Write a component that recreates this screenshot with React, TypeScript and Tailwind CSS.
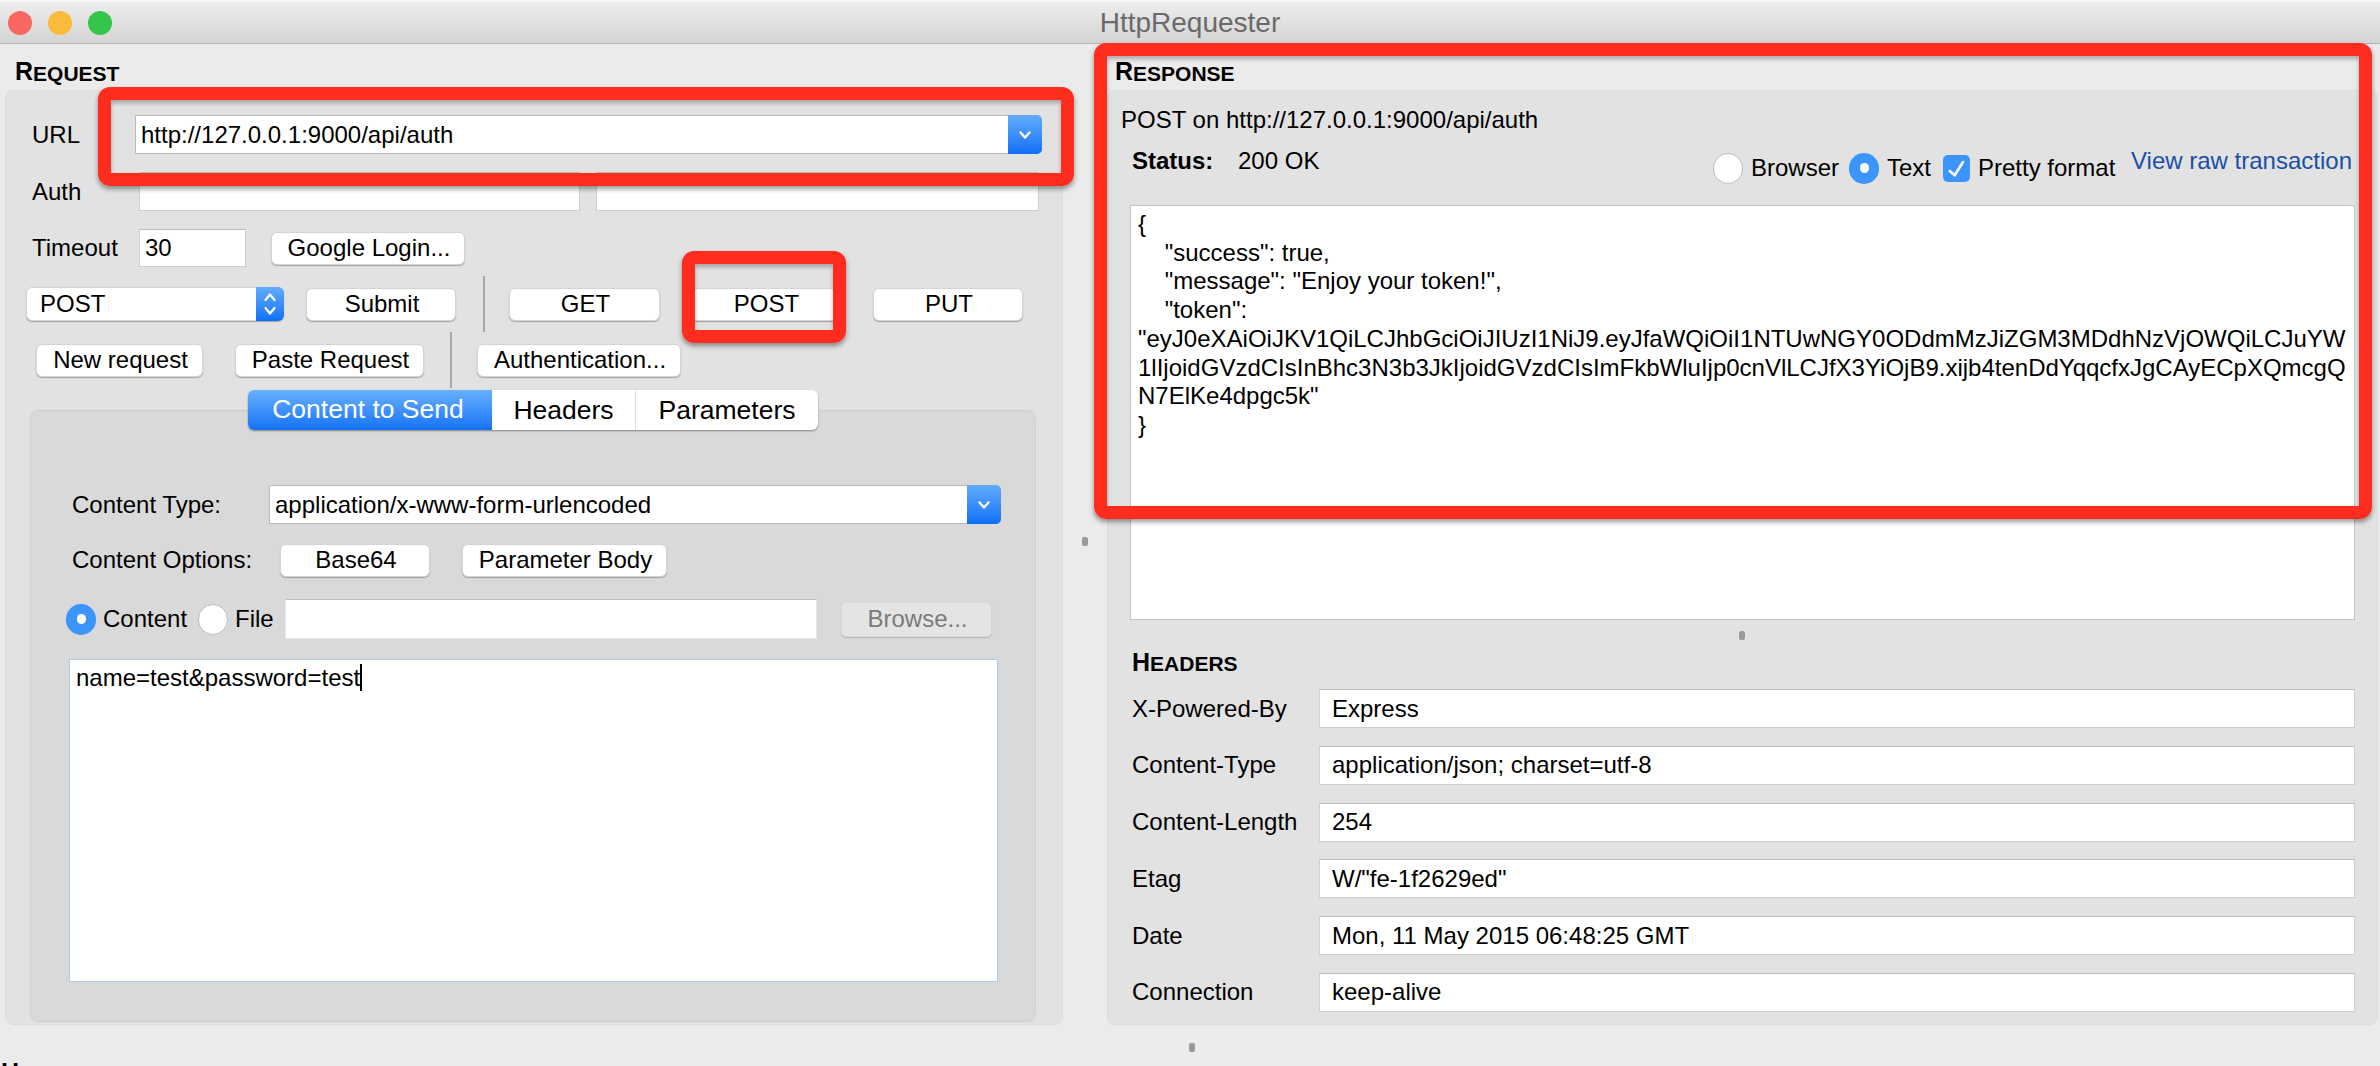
import React from "react";

const font = "font-['Liberation_Sans',Arial,sans-serif]";

function Chevron() {
  return (
    <svg width="14" height="10" viewBox="0 0 14 10" fill="none" stroke="white" strokeWidth="2.4" strokeLinecap="round" strokeLinejoin="round">
      <path d="M2.5 2.5 7 7.5l4.5-5" />
    </svg>
  );
}

function Stepper() {
  return (
    <svg width="14" height="26" viewBox="0 0 14 26" fill="none" stroke="white" strokeWidth="2.2" strokeLinecap="round" strokeLinejoin="round">
      <path d="M2.5 9 7 3.5 11.5 9" />
      <path d="M2.5 17 7 22.5l4.5-5.5" />
    </svg>
  );
}

function Button({ label, className = "" }: { label: string; className?: string }) {
  return (
    <button className={`flex h-[33px] items-center justify-center rounded-[6px] border border-[#d4d4d4] bg-white pl-[2px] text-black shadow-[0_1px_1px_rgba(0,0,0,0.28)] ${className}`}>
      {label}
    </button>
  );
}

function Field({ value = "", className = "" }: { value?: string; className?: string }) {
  return (
    <div className={`flex items-center border border-[#cfcfcf] border-t-[#bdbdbd] bg-white px-[5px] ${className}`}>{value}</div>
  );
}

function Combo({ value, className = "" }: { value: string; className?: string }) {
  return (
    <div className={`flex h-[39px] items-center rounded-r-[5px] border border-[#b9b9b9] bg-white pl-[5px] ${className}`}>
      <span className="flex-1">{value}</span>
      <span className="-my-px -mr-px flex h-[39px] w-[34px] items-center justify-center rounded-r-[5px] bg-gradient-to-b from-[#62acfc] to-[#0b6ff6]">
        <Chevron />
      </span>
    </div>
  );
}

function Radio({ on = false, className = "" }: { on?: boolean; className?: string }) {
  if (on) {
    return (
      <span className={`flex h-[31px] w-[30px] shrink-0 items-center justify-center rounded-full bg-[#3c95fb] ${className}`}>
        <span className="h-[10px] w-[9px] rounded-full bg-white" />
      </span>
    );
  }
  return <span className={`block h-[31px] w-[30px] shrink-0 rounded-full border border-[#bcbcbc] bg-white ${className}`} />;
}

function Grip({ className = "" }: { className?: string }) {
  return <span className={`block h-[9px] w-[6px] rounded-[2px] bg-[#9a9a9a] ${className}`} />;
}

function Overlay({ className }: { className: string }) {
  return (
    <div className={`pointer-events-none absolute rounded-[12px] border-[13px] border-[#ff2d1e] shadow-[0_3px_5px_rgba(0,0,0,0.4),inset_0_3px_4px_rgba(0,0,0,0.28)] ${className}`} />
  );
}

const headers = [
  ["X-Powered-By", "Express"],
  ["Content-Type", "application/json; charset=utf-8"],
  ["Content-Length", "254"],
  ["Etag", 'W/"fe-1f2629ed"'],
  ["Date", "Mon, 11 May 2015 06:48:25 GMT"],
  ["Connection", "keep-alive"],
];

const body = [
  "{",
  '    "success": true,',
  '    "message": "Enjoy your token!",',
  '    "token":',
  '"eyJ0eXAiOiJKV1QiLCJhbGciOiJIUzI1NiJ9.eyJfaWQiOiI1NTUwNGY0ODdmMzJiZGM3MDdhNzVjOWQiLCJuYW',
  "1lIjoidGVzdCIsInBhc3N3b3JkIjoidGVzdCIsImFkbWluIjp0cnVlLCJfX3YiOjB9.xijb4tenDdYqqcfxJgCAyECpXQmcgQ",
  'N7ElKe4dpgc5k"',
  "}",
];

export default function App() {
  return (
    <div className={`relative h-[1066px] w-[2380px] overflow-hidden bg-[#ebebeb] text-[24px] text-black ${font}`}>
      {/* title bar */}
      <div className="relative flex h-[44px] items-center justify-center border-b border-[#b4b4b4] border-t-2 border-t-[#f6f6f6] bg-gradient-to-b from-[#ededed] to-[#d4d4d4] text-[28px] text-[#6a6a6a]">
        <div className="absolute left-[8px] flex gap-[16px]">
          <span className="h-[24px] w-[24px] rounded-full bg-[#fa6760]" />
          <span className="h-[24px] w-[24px] rounded-full bg-[#fdbb3c]" />
          <span className="h-[24px] w-[24px] rounded-full bg-[#35c549]" />
        </div>
        HttpRequester
      </div>

      <div className="flex h-[1022px] pl-[5px] pr-[2px]">
        {/* request side */}
        <div className="flex w-[1058px] flex-col">
          <div className="flex h-[46px] items-end pb-[6px] pl-[10px] text-[21px] font-bold leading-none">
            <span className="text-[25px] leading-none">R</span>EQUEST
          </div>
          <div className="flex flex-1 flex-col rounded-[8px] border border-[#dcdcdc] bg-[#e2e2e2] pl-[20px] pt-[24px]">
            <div className="flex h-[39px] items-center pl-[6px]">
              <span className="w-[103px]">URL</span>
              <Combo value="http://127.0.0.1:9000/api/auth" className="w-[907px]" />
            </div>
            <div className="mt-[18px] flex h-[39px] items-center pl-[6px]">
              <span className="w-[107px]">Auth</span>
              <Field className="h-[39px] w-[441px]" />
              <Field className="ml-[16px] h-[39px] w-[443px]" />
            </div>
            <div className="mt-[18px] flex h-[38px] items-center pl-[6px]">
              <span className="w-[107px]">Timeout</span>
              <Field value="30" className="h-[38px] w-[107px]" />
              <Button label="Google Login..." className="ml-[25px] w-[194px]" />
            </div>
            <div className="mt-[9px] flex h-[56px] items-center">
              <div className="flex h-[34px] w-[258px] items-center rounded-[6px] border border-[#d4d4d4] bg-white pl-[13px] shadow-[0_1px_1px_rgba(0,0,0,0.28)]">
                <span className="flex-1">POST</span>
                <span className="-my-px -mr-px flex h-[34px] w-[28px] items-center justify-center rounded-r-[6px] bg-gradient-to-b from-[#62acfc] to-[#0b6ff6]">
                  <Stepper />
                </span>
              </div>
              <Button label="Submit" className="ml-[22px] w-[150px]" />
              <span className="ml-[27px] w-[2px] self-stretch bg-[#a8a8a8]" />
              <Button label="GET" className="ml-[24px] w-[151px]" />
              <Button label="POST" className="ml-[30px] w-[151px]" />
              <Button label="PUT" className="ml-[32px] w-[150px]" />
            </div>
            <div className="flex h-[56px] items-center pl-[10px]">
              <Button label="New request" className="w-[167px]" />
              <Button label="Paste Request" className="ml-[32px] w-[189px]" />
              <span className="ml-[26px] w-[2px] self-stretch bg-[#a8a8a8]" />
              <Button label="Authentication..." className="ml-[25px] w-[204px]" />
            </div>

            {/* tab pane */}
            <div className="mb-[2px] ml-[4px] mr-[26px] mt-[22px] flex flex-1 flex-col rounded-[8px] border border-[#cfcfcf] bg-[#d9d9d9]">
              <div className="-mt-[21px] flex h-[40px] w-[570px] self-center overflow-hidden rounded-[6px] bg-white pt-px text-[26.5px] shadow-[0_1px_2px_rgba(0,0,0,0.4)]">
                <div className="-mt-px flex w-[244px] items-center justify-center bg-gradient-to-b from-[#67b0fd] to-[#0e72f7] pr-[4px] text-white">Content to Send</div>
                <div className="flex w-[144px] items-center justify-center border-r border-[#dcdcdc]">Headers</div>
                <div className="flex flex-1 items-center justify-center">Parameters</div>
              </div>

              <div className="mt-[55px] flex h-[39px] items-center pl-[41px]">
                <span className="w-[197px]">Content Type:</span>
                <Combo value="application/x-www-form-urlencoded" className="w-[732px]" />
              </div>
              <div className="mt-[19px] flex h-[34px] items-center pl-[41px]">
                <span className="w-[208px]">Content Options:</span>
                <Button label="Base64" className="w-[150px]" />
                <Button label="Parameter Body" className="ml-[32px] w-[205px]" />
              </div>
              <div className="mt-[22px] flex h-[40px] items-center pl-[35px]">
                <Radio on />
                <span className="ml-[7px] w-[95px]">Content</span>
                <Radio />
                <span className="ml-[7px] w-[50px]">File</span>
                <Field className="h-[40px] w-[532px] border-[#e8e8e8]" />
                <button className="ml-[24px] flex h-[35px] w-[151px] items-center justify-center rounded-[5px] border border-[#d8d8d8] bg-[#e4e4e4] pl-[2px] text-[#7a7a7a] shadow-[0_1px_1px_rgba(0,0,0,0.15)]">Browse...</button>
              </div>
              <div className="ml-[38px] mt-[20px] h-[323px] w-[929px] border border-[#a9cdea] bg-white pl-[6px] pt-[4px] leading-[27px]">
                <span className="inline-block border-r-2 border-black">name=test&amp;password=test</span>
              </div>
            </div>
          </div>
          <div className="-ml-[4px] h-[41px] pt-[35px] text-[25px] font-bold leading-none">H</div>
        </div>

        {/* splitter */}
        <div className="flex w-[44px] items-start justify-center pt-[493px]">
          <Grip />
        </div>

        {/* response side */}
        <div className="flex flex-1 flex-col">
          <div className="flex h-[46px] items-end pb-[6px] pl-[8px] text-[21px] font-bold leading-none">
            <span className="text-[25px] leading-none">R</span>ESPONSE
          </div>
          <div className="flex h-[935px] flex-col rounded-[8px] border border-[#dcdcdc] bg-[#e2e2e2] pl-[13px] pr-[15px]">
            <div className="mt-[14px] h-[30px] leading-[30px]">POST on http://127.0.0.1:9000/api/auth</div>
            <div className="mt-[8px] flex h-[62px] items-start pl-[11px]">
              <span className="w-[106px] font-bold">Status:</span>
              <span>200 OK</span>
              <div className="ml-auto flex items-center pt-[7px]">
                <Radio />
                <span className="ml-[8px] w-[98px]">Browser</span>
                <Radio on />
                <span className="ml-[8px] w-[56px]">Text</span>
                <span className="flex h-[27px] w-[27px] items-center justify-center rounded-[5px] bg-[#3c95fb]">
                  <svg width="27" height="27" viewBox="0 0 27 27" fill="none" stroke="white" strokeWidth="2.6" strokeLinecap="round" strokeLinejoin="round">
                    <path d="M6.7 16l5 4.3L20 7" />
                  </svg>
                </span>
                <span className="ml-[8px] w-[153px]">Pretty format</span>
              </div>
              <a className="w-[231px] text-[#1a4fa8]">View raw transaction</a>
            </div>
            <div className="ml-[9px] h-[415px] w-[1225px] border border-[#c4c4c4] bg-white pl-[7px] pt-[4px] leading-[28.7px] whitespace-pre">
              {body.map((line) => (
                <div key={line}>{line}</div>
              ))}
            </div>
            <div className="flex h-[30px] items-center justify-center">
              <Grip />
            </div>
            <div className="ml-[11px] text-[21px] font-bold leading-[24px]">
              <span className="text-[25px]">H</span>EADERS
            </div>
            <div className="mt-[13px] flex flex-col gap-[17.8px] pl-[11px]">
              {headers.map(([k, v]) => (
                <div key={k} className="flex h-[39px] items-center">
                  <span className="w-[187px]">{k}</span>
                  <Field value={v} className="h-[39px] w-[1036px] pl-[12px]" />
                </div>
              ))}
            </div>
          </div>
          <div className="flex flex-1 pl-[82px] pt-[18px]">
            <Grip />
          </div>
        </div>
      </div>

      <Overlay className="left-[98px] top-[87px] h-[99px] w-[976px]" />
      <Overlay className="left-[682px] top-[251px] h-[92px] w-[164px]" />
      <Overlay className="left-[1094px] top-[43px] h-[476px] w-[1278px]" />
    </div>
  );
}
